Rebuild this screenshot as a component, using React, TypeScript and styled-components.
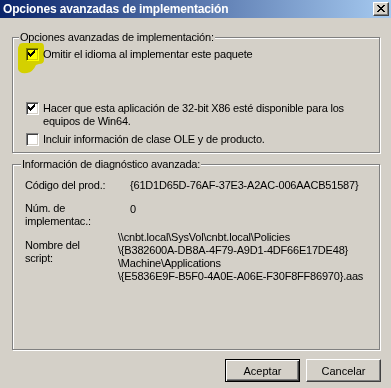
import React from "react";
import styled, { createGlobalStyle } from "styled-components";

const Global = createGlobalStyle`
  html, body { margin: 0; padding: 0; background: #D4D0C8; }
  body {
    font-family: "Liberation Sans", Arial, sans-serif;
    font-size: 11px;
    letter-spacing: -0.2px;
    color: #000;
  }
  #root { width: 391px; height: 388px; }
`;

const Window = styled.div`
  position: relative;
  width: 391px;
  height: 388px;
  display: flex;
  flex-direction: column;
  background: #d4d0c8;
  overflow: hidden;
  box-sizing: border-box;
`;

const TitleBar = styled.div`
  height: 18px;
  flex: none;
  display: flex;
  align-items: center;
  justify-content: space-between;
  padding: 0 2px 0 3px;
  background: linear-gradient(to right, #0a246a, #a6caf0);
`;

const Title = styled.span`
  color: #fff;
  font-weight: bold;
  font-size: 12px;
  letter-spacing: -0.15px;
  line-height: 18px;
  white-space: nowrap;
`;

const CloseButton = styled.button`
  width: 16px;
  height: 14px;
  padding: 0;
  margin: 0;
  box-sizing: border-box;
  background: #d4d0c8;
  border: 1px solid;
  border-color: #fff #404040 #404040 #fff;
  box-shadow: inset -1px -1px 0 #808080;
  display: flex;
  align-items: center;
  justify-content: center;
  svg { display: block; margin-top: -1px; }
`;

const Body = styled.div`
  flex: 1;
  display: flex;
  flex-direction: column;
  padding: 13px 11px 6px 12px;
  min-height: 0;
`;

const GroupBox = styled.fieldset<{ $grow?: boolean; $mt?: number }>`
  margin: ${(p) => p.$mt ?? 0}px 0 0 0;
  padding: 0;
  min-width: 0;
  border: 1px solid #808080;
  box-shadow: inset 1px 1px 0 #fff, 1px 1px 0 #fff;
  ${(p) => (p.$grow ? "flex: 1;" : "")}
`;

const Legend = styled.legend<{ $ml: number }>`
  margin-left: ${(p) => p.$ml}px;
  padding: 0 1px;
  line-height: 13px;
  background: #d4d0c8;
`;

const GroupInner = styled.div<{ $pad: string }>`
  padding: ${(p) => p.$pad};
`;

const CheckRow = styled.label<{ $mt?: number }>`
  display: flex;
  align-items: flex-start;
  gap: 4px;
  line-height: 13px;
  margin-top: ${(p) => p.$mt ?? 0}px;
`;

const CheckBox = styled.span`
  flex: none;
  width: 13px;
  height: 13px;
  box-sizing: border-box;
  background: #fff;
  border: 1px solid;
  border-color: #808080 #fff #fff #808080;
  box-shadow: inset 1px 1px 0 #404040, inset -1px -1px 0 #d4d0c8;
  svg { display: block; }
`;

const InfoRow = styled.div<{ $mt: number }>`
  display: grid;
  grid-template-columns: 93px 1fr;
  line-height: 13px;
  margin-top: ${(p) => p.$mt}px;
`;

const InfoLabel = styled.div<{ $offset?: number }>`
  padding-top: ${(p) => p.$offset ?? 0}px;
`;

const InfoValue = styled.div<{ $indent?: number; $offset?: number }>`
  padding-left: ${(p) => p.$indent ?? 0}px;
  padding-top: ${(p) => p.$offset ?? 0}px;
  white-space: nowrap;
`;

const ButtonRow = styled.div`
  flex: none;
  display: flex;
  justify-content: flex-end;
  gap: 6px;
  margin-top: 9px;
  margin-right: -1px;
`;

const DialogButton = styled.button<{ $default?: boolean }>`
  width: 75px;
  height: 23px;
  padding: 0;
  margin: 0;
  box-sizing: border-box;
  font: inherit;
  color: #000;
  background: #d4d0c8;
  border: 1px solid;
  ${(p) =>
    p.$default
      ? `border-color: #000;
         box-shadow: inset 1px 1px 0 #fff, inset -1px -1px 0 #404040, inset -2px -2px 0 #808080;`
      : `border-color: #fff #404040 #404040 #fff;
         box-shadow: inset -1px -1px 0 #808080;`}
`;

const Highlight = styled.svg`
  position: absolute;
  left: 0;
  top: 0;
  pointer-events: none;
  mix-blend-mode: multiply;
`;

const CheckMark = () => (
  <svg width="9" height="9" viewBox="2 2 9 9" shapeRendering="crispEdges">
    <path
      fill="#000"
      d="M9 3h1v1h-1zM8 4h2v1h-2zM3 5h1v1h-1zM7 5h3v1h-3zM3 6h2v1h-2zM6 6h3v1h-3zM3 7h5v1h-5zM4 8h3v1h-3zM5 9h1v1h-1z"
    />
  </svg>
);

const CloseGlyph = () => (
  <svg width="8" height="7" viewBox="0 0 8 7" shapeRendering="crispEdges">
    <path
      fill="#000"
      d="M0 0h2v1h-2zM6 0h2v1h-2zM1 1h2v1h-2zM5 1h2v1h-2zM2 2h4v1h-4zM3 3h2v1h-2zM2 4h4v1h-4zM1 5h2v1h-2zM5 5h2v1h-2zM0 6h2v1h-2zM6 6h2v1h-2z"
    />
  </svg>
);

function Check({ checked }: { checked: boolean }) {
  return <CheckBox>{checked && <CheckMark />}</CheckBox>;
}

export default function App() {
  return (
    <>
      <Global />
      <Window>
        <TitleBar>
          <Title>Opciones avanzadas de implementación</Title>
          <CloseButton aria-label="Cerrar">
            <CloseGlyph />
          </CloseButton>
        </TitleBar>
        <Body>
          <GroupBox>
            <Legend $ml={6}>Opciones avanzadas de implementación:</Legend>
            <GroupInner $pad="4px 12px 6px 13px">
              <CheckRow>
                <Check checked />
                <span>Omitir el idioma al implementar este paquete</span>
              </CheckRow>
              <CheckRow $mt={41}>
                <Check checked />
                <span>
                  Hacer que esta aplicación de 32-bit X86 esté disponible para los
                  <br />
                  equipos de Win64.
                </span>
              </CheckRow>
              <CheckRow $mt={5}>
                <Check checked={false} />
                <span>Incluir información de clase OLE y de producto.</span>
              </CheckRow>
            </GroupInner>
          </GroupBox>
          <GroupBox $grow $mt={5}>
            <Legend $ml={8}>Información de diagnóstico avanzada:</Legend>
            <GroupInner $pad="8px 12px 0 12px">
              <InfoRow $mt={0}>
                <InfoLabel>Código del prod.:</InfoLabel>
                <InfoValue $indent={12}>{"{61D1D65D-76AF-37E3-A2AC-006AACB51587}"}</InfoValue>
              </InfoRow>
              <InfoRow $mt={10}>
                <InfoLabel>
                  Núm. de
                  <br />
                  implementac.:
                </InfoLabel>
                <InfoValue $indent={12} $offset={1}>0</InfoValue>
              </InfoRow>
              <InfoRow $mt={3}>
                <InfoLabel $offset={8}>
                  Nombre del
                  <br />
                  script:
                </InfoLabel>
                <InfoValue>
                  {"\\\\cnbt.local\\SysVol\\cnbt.local\\Policies"}
                  <br />
                  {"\\{B382600A-DB8A-4F79-A9D1-4DF66E17DE48}"}
                  <br />
                  {"\\Machine\\Applications"}
                  <br />
                  {"\\{E5836E9F-B5F0-4A0E-A06E-F30F8FF86970}.aas"}
                </InfoValue>
              </InfoRow>
            </GroupInner>
          </GroupBox>
          <ButtonRow>
            <DialogButton $default>Aceptar</DialogButton>
            <DialogButton>Cancelar</DialogButton>
          </ButtonRow>
        </Body>
        <Highlight width="391" height="388" viewBox="0 0 391 388">
          <path
            fill="#ffff00"
            d="M19 46Q19 43 23 43L41 43Q44 43 44 47L44 60Q44 64 39 64L36 65Q33 72 27 73Q19 74 18 69L18 49Q18 46 19 46Z"
          />
        </Highlight>
      </Window>
    </>
  );
}
